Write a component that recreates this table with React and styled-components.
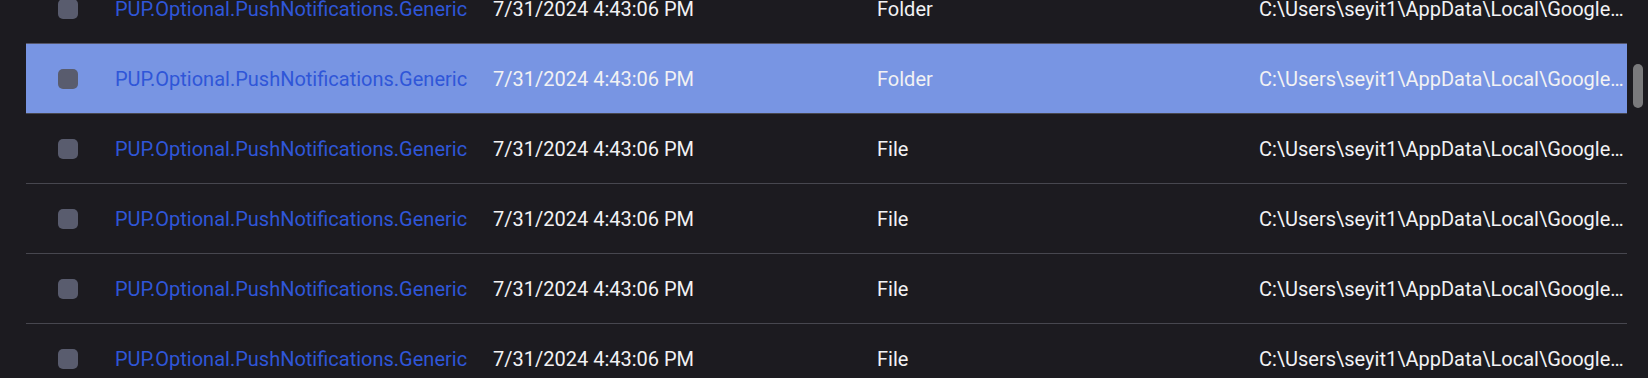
import React from 'react';
import styled, { createGlobalStyle } from 'styled-components';

const rows = [
  { type: 'Folder' },
  { type: 'Folder', selected: true },
  { type: 'File' },
  { type: 'File' },
  { type: 'File' },
  { type: 'File' },
];

function App() {
  return (
    <>
      <GlobalStyle />
      <Page>
        <Table>
          <Body>
            {rows.map((row, i) => (
              <Row key={i} $selected={row.selected}>
                <CheckCell>
                  <Checkbox />
                </CheckCell>
                <NameCell>PUP.Optional.PushNotifications.Generic</NameCell>
                <Cell>7/31/2024 4:43:06 PM</Cell>
                <Cell>{row.type}</Cell>
                <PathCell>C:\Users\seyit1\AppData\Local\Google\Chrome\User Data\Default\Platform Notifications</PathCell>
              </Row>
            ))}
          </Body>
        </Table>
        <Track>
          <Thumb />
        </Track>
      </Page>
    </>
  );
}

export default App;

const GlobalStyle = createGlobalStyle`
  html, body {
    margin: 0;
    padding: 0;
    background: #1c1b20;
    overflow: hidden;
  }
  body {
    font-family: Roboto, "Liberation Sans", sans-serif;
  }
`;

const Page = styled.div`
  display: flex;
  height: 378px;
  overflow: hidden;
  padding-left: 26px;
  background: #1c1b20;
`;

const Table = styled.div`
  flex: 1;
  min-width: 0;
  overflow: hidden;
`;

/* list is scrolled down a little, as in the capture */
const Body = styled.div`
  margin-top: -26px;
  display: flex;
  flex-direction: column;
`;

const Row = styled.div`
  display: grid;
  grid-template-columns: 89px 378px 384px 382px 1fr;
  align-items: center;
  height: 69px;
  border-bottom: 1px solid #47474f;
  background: ${(p) => (p.$selected ? '#7895e3' : 'transparent')};
  border-top: ${(p) => (p.$selected ? '1px solid #55566a' : 'none')};
  margin-top: ${(p) => (p.$selected ? '-1px' : '0')};
  font-size: 20px;
  color: #f2f2f4;
`;

const CheckCell = styled.div`
  display: flex;
  align-items: center;
  padding-left: 32px;
`;

const Checkbox = styled.span`
  display: block;
  width: 20px;
  height: 20px;
  border-radius: 5px;
  background: #595c6e;
`;

const Cell = styled.div`
  white-space: nowrap;
  overflow: hidden;
`;

const NameCell = styled(Cell)`
  color: #2f56d8;
`;

const PathCell = styled(Cell)`
  text-overflow: ellipsis;
  margin-right: -2px;
`;

const Track = styled.div`
  width: 21px;
  padding-left: 6px;
  box-sizing: border-box;
`;

const Thumb = styled.div`
  width: 10px;
  height: 44px;
  margin-top: 64px;
  border-radius: 5px;
  background: #7a7a7c;
`;
